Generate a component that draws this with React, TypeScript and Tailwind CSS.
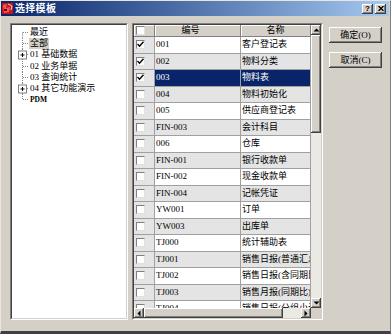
const ROWS = [
  { code: '001', name: '客户登记表', checked: true },
  { code: '002', name: '物料分类', checked: true },
  { code: '003', name: '物料表', checked: true, selected: true },
  { code: '004', name: '物料初始化' },
  { code: '005', name: '供应商登记表' },
  { code: 'FIN-003', name: '会计科目' },
  { code: '006', name: '仓库' },
  { code: 'FIN-001', name: '银行收款单' },
  { code: 'FIN-002', name: '现金收款单' },
  { code: 'FIN-004', name: '记帐凭证' },
  { code: 'YW001', name: '订单' },
  { code: 'YW003', name: '出库单' },
  { code: 'TJ000', name: '统计辅助表' },
  { code: 'TJ001', name: '销售日报(普通汇总)' },
  { code: 'TJ002', name: '销售日报(含同期比)' },
  { code: 'TJ003', name: '销售月报(同期比)' },
  { code: 'TJ004', name: '销售日报(分组小计)' },
];

const TREE = [
  { label: '最近', line: 'first' },
  { label: '全部', line: 'mid', active: true },
  { label: '01 基础数据', line: 'mid', plus: true },
  { label: '02 业务单据', line: 'mid' },
  { label: '03 查询统计', line: 'mid' },
  { label: '04 其它功能演示', line: 'mid', plus: true },
  { label: 'PDM', line: 'last' },
];

const RAISED = 'shadow-[inset_-1px_-1px_0_#404040,inset_1px_1px_0_#ffffff,inset_-2px_-2px_0_#808080]';
const FONT = "font-['Liberation_Serif','Noto_Sans_CJK_SC',serif]";

function Check({ checked }: { checked?: boolean }) {
  return (
    <div className="w-[9px] h-[9px] bg-white border border-t-[#808080] border-l-[#808080] border-r-[#e0e0e0] border-b-[#e0e0e0] flex items-center justify-center">
      {checked && (
        <svg width="7" height="7" viewBox="0 0 7 7">
          <path d="M0.5 3 L2.5 5.2 L6.5 0.8" stroke="#000" strokeWidth="1.4" fill="none" />
        </svg>
      )}
    </div>
  );
}

function Arrow({ dir }: { dir: 'up' | 'down' | 'left' | 'right' }) {
  const d = {
    up: 'M0.5 3.5 L3.5 0.5 L6.5 3.5 Z',
    down: 'M0.5 0.5 L3.5 3.5 L6.5 0.5 Z',
    left: 'M3.5 0.5 L0.5 3.5 L3.5 6.5 Z',
    right: 'M0.5 0.5 L3.5 3.5 L0.5 6.5 Z',
  }[dir];
  const vertical = dir === 'up' || dir === 'down';
  return (
    <div className={`w-[10px] h-[10px] bg-[#d4d0c8] flex items-center justify-center ${RAISED}`}>
      <svg width={vertical ? 7 : 4} height={vertical ? 4 : 7} viewBox={vertical ? '0 0 7 4' : '0 0 4 7'}>
        <path d={d} fill="#000" />
      </svg>
    </div>
  );
}

function TreeGutter({ line, plus }: { line: string; plus?: boolean }) {
  const y1 = line === 'first' ? 5.5 : 0;
  const y2 = line === 'last' ? 5.5 : 11.2;
  return (
    <svg width="16" height="11.2" viewBox="0 0 16 11.2" className="shrink-0">
      <line x1="10.5" y1={y1} x2="10.5" y2={y2} stroke="#808080" strokeDasharray="1 1" />
      <line x1="11" y1="5.5" x2="16" y2="5.5" stroke="#808080" strokeDasharray="1 1" />
      {plus && (
        <g>
          <rect x="6.5" y="2" width="8" height="8" fill="#fff" stroke="#808080" />
          <line x1="8.5" y1="6" x2="12.5" y2="6" stroke="#000" />
          <line x1="10.5" y1="4" x2="10.5" y2="8" stroke="#000" />
        </g>
      )}
    </svg>
  );
}

export default function App() {
  return (
    <div className={`w-[391px] h-[334px] bg-[#d4d0c8] border-t border-l border-t-[#e8e6e0] border-l-[#e8e6e0] border-r border-r-[#808080] border-b-[3px] border-b-[#404040] flex flex-col overflow-hidden ${FONT}`}>
      {/* Title bar */}
      <div className="h-[15px] mr-[1px] flex items-center bg-gradient-to-r from-[#0a246a] to-[#a6caf0] pl-[1px] pr-[3px]">
        <svg width="11" height="11" viewBox="0 0 11 11" className="shrink-0">
          <rect x="0" y="0" width="11" height="11" fill="#c01818" />
          <path d="M1 2 L5 1 L4 5 L8 4 L7 9 L2 10 Z" fill="#ff5050" />
          <path d="M6 1 L10 3 L9 7" stroke="#f0d0d0" strokeWidth="1" fill="none" />
          <rect x="2" y="6" width="3" height="2" fill="#600000" />
        </svg>
        <span className="ml-[2px] text-white text-[10px] font-bold leading-none tracking-[0.3px]">选择模板</span>
        <div className="ml-auto flex gap-[2px]">
          <div className={`w-[11px] h-[10px] bg-[#d4d0c8] flex items-center justify-center text-[8px] font-bold leading-none text-black font-['Liberation_Sans',sans-serif] ${RAISED}`}>?</div>
          <div className={`w-[11px] h-[10px] bg-[#d4d0c8] flex items-center justify-center ${RAISED}`}>
            <svg width="6" height="5" viewBox="0 0 6 5">
              <path d="M0.5 0 L5.5 5 M5.5 0 L0.5 5" stroke="#000" strokeWidth="1.3" />
            </svg>
          </div>
        </div>
      </div>

      {/* Body */}
      <div className="flex pl-[9px] pt-[7px]">
        {/* Tree */}
        <div className="w-[118px] h-[297px] border border-t-[#808080] border-l-[#808080] border-r-white border-b-white">
          <div className="h-full bg-white border border-t-[#404040] border-l-[#404040] border-r-[#d4d0c8] border-b-[#d4d0c8] pt-[2px]">
            {TREE.map(item => (
              <div key={item.label} className="h-[11.2px] flex items-center">
                <TreeGutter line={item.line} plus={item.plus} />
                <span
                  className={`ml-[1px] px-[1px] leading-[11px] text-black whitespace-nowrap ${item.active ? 'bg-[#d4d0c8]' : ''} ${item.label === 'PDM' ? 'text-[7.5px] font-semibold' : 'text-[9px]'}`}
                >
                  {item.label}
                </span>
              </div>
            ))}
          </div>
        </div>

        {/* Grid */}
        <div className="ml-[4px] w-[191px] h-[297px] border border-t-[#808080] border-l-[#808080] border-r-white border-b-white">
          <div className="h-full flex flex-col bg-[#d4d0c8] border border-t-[#404040] border-l-[#404040] border-r-[#d4d0c8] border-b-[#d4d0c8]">
            <div className="h-[283px] flex">
              <div className="w-[177px] overflow-hidden bg-white">
                {/* Header */}
                <div className="h-[12px] flex">
                  <div className="w-[21px] h-full bg-[#d4d0c8] border-r border-b border-[#808080] shadow-[inset_1px_1px_0_#ffffff] flex items-center pl-[2px]">
                    <Check />
                  </div>
                  <div className="w-[86px] h-full bg-[#d4d0c8] border-r border-b border-[#808080] shadow-[inset_1px_1px_0_#ffffff] flex items-center justify-center pr-[14px] text-[9px] leading-none text-black">
                    编号
                  </div>
                  <div className="w-[70px] h-full bg-[#d4d0c8] border-r border-b border-[#808080] shadow-[inset_1px_1px_0_#ffffff] flex items-center justify-center text-[9px] leading-none text-black">
                    名称
                  </div>
                </div>
                {/* Rows */}
                {ROWS.map((r, i) => {
                  const rowBg = r.selected ? 'bg-[#0a246a] text-white' : i % 2 === 1 ? 'bg-[#e4e4e4] text-black' : 'bg-white text-black';
                  return (
                    <div key={r.code} className="h-[16.5px] flex">
                      <div className="w-[21px] h-full bg-[#e4e4e4] border-r border-b border-[#a0a0a0] flex items-center pl-[2px]">
                        <Check checked={r.checked} />
                      </div>
                      <div className={`w-[86px] h-full border-r border-b border-[#a0a0a0] flex items-center pl-[1px] text-[9px] leading-none ${rowBg}`}>
                        {r.code}
                      </div>
                      <div className={`w-[70px] h-full border-r border-b border-[#a0a0a0] flex items-center pl-[1px] text-[9px] leading-none whitespace-nowrap overflow-hidden ${rowBg}`}>
                        {r.name}
                      </div>
                    </div>
                  );
                })}
              </div>
              {/* Vertical scrollbar */}
              <div className="w-[10px] flex flex-col bg-[#ebe9e4]">
                <Arrow dir="up" />
                <div className={`h-[98px] bg-[#d4d0c8] ${RAISED}`} />
                <div className="flex-1" />
                <Arrow dir="down" />
              </div>
            </div>
            {/* Horizontal scrollbar */}
            <div className="h-[10px] flex">
              <div className="w-[177px] flex bg-[#ebe9e4]">
                <Arrow dir="left" />
                <div className={`w-[139px] h-full bg-[#d4d0c8] ${RAISED}`} />
                <div className="flex-1" />
                <Arrow dir="right" />
              </div>
              <div className="w-[10px] bg-[#d4d0c8]" />
            </div>
          </div>
        </div>

        {/* Buttons */}
        <div className="ml-[6px] pt-[4px] flex flex-col gap-[9px]">
          <button className={`w-[53px] h-[16px] bg-[#d4d0c8] text-[9px] leading-none text-black flex items-center justify-center ${RAISED}`}>
            确定(O)
          </button>
          <button className={`w-[53px] h-[16px] bg-[#d4d0c8] text-[9px] leading-none text-black flex items-center justify-center ${RAISED}`}>
            取消(C)
          </button>
        </div>
      </div>
    </div>
  );
}
